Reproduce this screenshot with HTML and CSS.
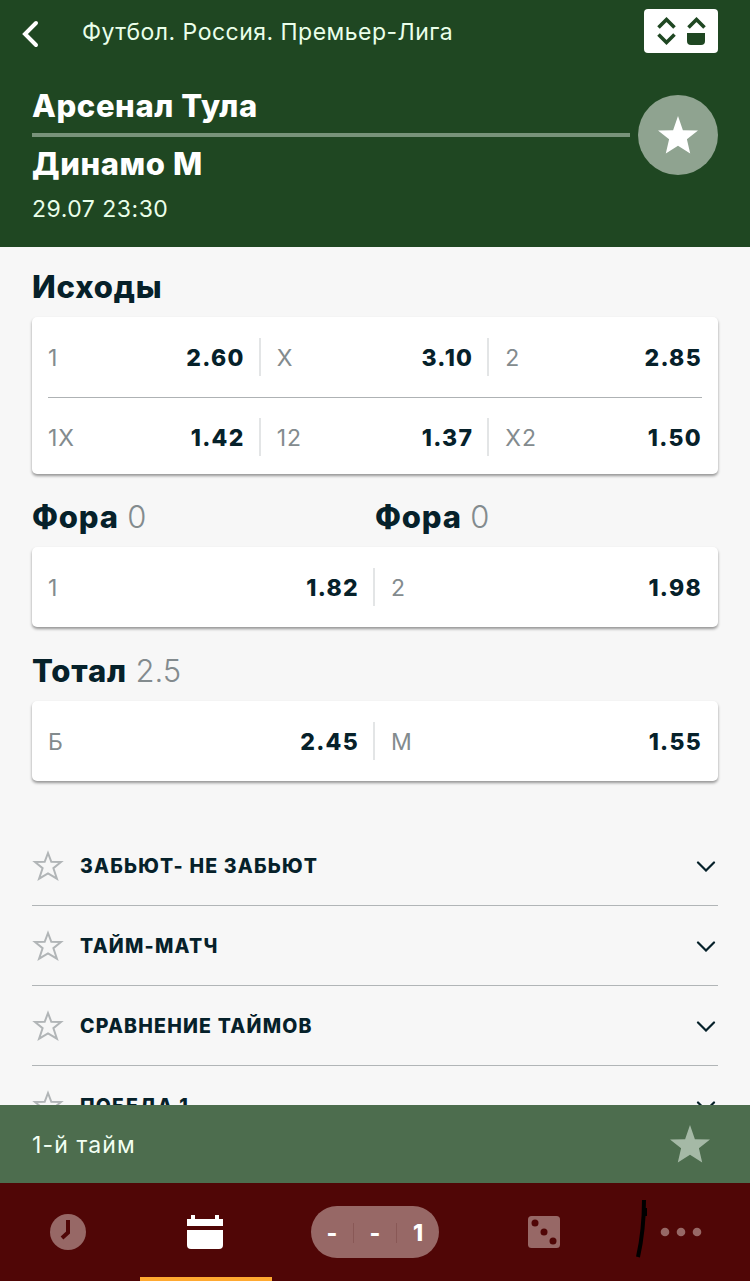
FILE: index.html
```
<!DOCTYPE html>
<html lang="ru">
<head>
    <meta charset="UTF-8">
    <meta name="viewport" content="width=device-width, initial-scale=1.0">
    <title>Арсенал Тула - Динамо М</title>
    <link rel="stylesheet" href="styles.css">
</head>
<body>
<svg class="symbols">
    <symbol id="star" viewBox="0 0 40 38">
        <path d="M20 0L24.9 14.2L40 14.5L28.9 23.3L32.2 37.5L20 29.8L7.8 37.5L11.1 23.3L0 14.5L15.1 14.2Z"/>
    </symbol>
    <symbol id="star-outline" viewBox="0 0 32 32">
        <path d="M16 3L19.3 11.8L29 12L21.4 18.2L24.9 28.7L16 23.4L7.1 28.7L10.6 18.2L3 12L12.7 11.8Z" fill="none" stroke="#b1b5b7" stroke-width="2"/>
    </symbol>
    <symbol id="chevron" viewBox="0 0 20 12">
        <path d="M2 2.5L10 10.5L18 2.5" fill="none" stroke="#06212a" stroke-width="2.2" stroke-linecap="round"/>
    </symbol>
</svg>
<div class="app">
    <header class="header">
        <div class="topbar">
            <svg class="back" width="20" height="30" viewBox="0 0 20 30">
                <path d="M16 4L5 15L16 26" fill="none" stroke="#fff" stroke-width="4" stroke-linecap="round"/>
            </svg>
            <div class="league">Футбол. Россия. Премьер-Лига</div>
            <div class="view-toggle">
                <svg width="74" height="44" viewBox="0 0 74 44">
                    <path d="M14.5 18.5L22.5 10.5L30.5 18.5M14.5 25.5L22.5 33.5L30.5 25.5M44.5 18.5L52.5 10.5L60.5 18.5" fill="none" stroke="#1f4722" stroke-width="3.6"/>
                    <path d="M43 24H61V32Q61 36 57 36H47Q43 36 43 32Z" fill="#1f4722"/>
                </svg>
            </div>
        </div>
        <div class="match">
            <div class="teams">
                <div class="team">Арсенал Тула</div>
                <div class="team-line"></div>
                <div class="team">Динамо М</div>
            </div>
            <div class="favorite">
                <svg width="40" height="38"><use href="#star"/></svg>
            </div>
        </div>
        <div class="date">29.07 23:30</div>
    </header>

    <main class="content">
        <h2 class="title">Исходы</h2>
        <div class="card">
            <div class="row three">
                <div class="cell"><span>1</span><b>2.60</b></div>
                <div class="cell"><span>X</span><b>3.10</b></div>
                <div class="cell"><span>2</span><b>2.85</b></div>
            </div>
            <div class="separator"></div>
            <div class="row three second">
                <div class="cell"><span>1X</span><b>1.42</b></div>
                <div class="cell"><span>12</span><b>1.37</b></div>
                <div class="cell"><span>X2</span><b>1.50</b></div>
            </div>
        </div>

        <div class="titles">
            <h2 class="title">Фора <span>0</span></h2>
            <h2 class="title">Фора <span>0</span></h2>
        </div>
        <div class="card">
            <div class="row two">
                <div class="cell"><span>1</span><b>1.82</b></div>
                <div class="cell"><span>2</span><b>1.98</b></div>
            </div>
        </div>

        <div class="titles total">
            <h2 class="title">Тотал <span>2.5</span></h2>
        </div>
        <div class="card">
            <div class="row two">
                <div class="cell"><span>Б</span><b>2.45</b></div>
                <div class="cell"><span>М</span><b>1.55</b></div>
            </div>
        </div>

        <div class="markets">
            <div class="market">
                <svg width="32" height="32"><use href="#star-outline"/></svg>
                <div class="market-name">ЗАБЬЮТ- НЕ ЗАБЬЮТ</div>
                <svg class="arrow" width="20" height="12"><use href="#chevron"/></svg>
            </div>
            <div class="market">
                <svg width="32" height="32"><use href="#star-outline"/></svg>
                <div class="market-name">ТАЙМ-МАТЧ</div>
                <svg class="arrow" width="20" height="12"><use href="#chevron"/></svg>
            </div>
            <div class="market">
                <svg width="32" height="32"><use href="#star-outline"/></svg>
                <div class="market-name">СРАВНЕНИЕ ТАЙМОВ</div>
                <svg class="arrow" width="20" height="12"><use href="#chevron"/></svg>
            </div>
            <div class="market">
                <svg width="32" height="32"><use href="#star-outline"/></svg>
                <div class="market-name">ПОБЕДА 1</div>
                <svg class="arrow" width="20" height="12"><use href="#chevron"/></svg>
            </div>
        </div>
    </main>

    <div class="period">
        <span>1-й тайм</span>
        <svg width="40" height="38"><use href="#star"/></svg>
    </div>

    <nav class="tabs">
        <div class="tab">
            <svg width="36" height="36" viewBox="0 0 36 36">
                <circle cx="18" cy="18" r="18" fill="#976866"/>
                <path d="M18 6V18.5L12 24" fill="none" stroke="#500606" stroke-width="4"/>
            </svg>
        </div>
        <div class="tab active">
            <svg width="36" height="36" viewBox="0 0 36 36" fill="#fff">
                <path d="M0 5H4V1H8V5H28V1H32V5H36V12H0Z"/>
                <path d="M0 16H36V31Q36 35 32 35H4Q0 35 0 31Z"/>
            </svg>
        </div>
        <div class="tab">
            <div class="coupon"><span>-</span><span>-</span><span>1</span></div>
        </div>
        <div class="tab">
            <svg width="32" height="32" viewBox="0 0 32 32">
                <rect width="32" height="32" rx="3.5" fill="#976866"/>
                <g fill="#500606"><circle cx="7" cy="7" r="3.5"/><circle cx="16" cy="16" r="3.5"/><circle cx="25" cy="25" r="3.5"/></g>
            </svg>
        </div>
        <div class="tab last">
            <svg width="70" height="60" viewBox="0 0 70 60">
                <path d="M9 2Q9 32 3 59" fill="none" stroke="#000" stroke-width="4"/>
                <path d="M10 10V18" stroke="#000" stroke-width="4"/>
                <g fill="#976866"><circle cx="30" cy="34" r="4.3"/><circle cx="46" cy="34" r="4.3"/><circle cx="62" cy="34" r="4.3"/></g>
            </svg>
        </div>
    </nav>
</div>
</body>
</html>
```
FILE: styles.css
```
* {
    box-sizing: border-box;
}

body {
    margin: 0;
    font-family: 'Inter', 'Open Sans', sans-serif;
    font-size: 23px;
    color: #06212a;
    background-color: #f7f7f7;
}

svg {
    display: block;
    flex: none;
}

.symbols {
    display: none;
}

.app {
    display: flex;
    flex-direction: column;
    height: 1281px;
    overflow: hidden;
}

.header {
    flex: none;
    height: 247px;
    padding: 9px 32px 0;
    background-color: #1f4722;
    color: #fff;
}

.topbar {
    display: flex;
    height: 44px;
}

.back {
    margin: 10px 0 0 -12px;
}

.league {
    flex: 1;
    margin-left: 42px;
    line-height: 46px;
    letter-spacing: 0.48px;
    color: #eaffea;
}

.view-toggle {
    background-color: #fff;
    border-radius: 4px;
    overflow: hidden;
}

.match {
    display: flex;
    align-items: center;
    gap: 8px;
    margin-top: 33px;
}

.teams {
    flex: 1;
}

.team {
    padding-bottom: 1px;
    font-size: 31px;
    font-weight: 800;
    line-height: 39px;
    letter-spacing: 0.6px;
}

.team-line {
    height: 4px;
    margin: 7px 0;
    background-color: #78937a;
}

.favorite {
    display: flex;
    align-items: center;
    justify-content: center;
    width: 80px;
    height: 80px;
    border-radius: 50%;
    background-color: #8fa390;
    fill: #fff;
}

.date {
    margin-top: 10px;
    line-height: 30px;
    letter-spacing: 0.5px;
    color: #eaffea;
}

.content {
    flex: none;
    height: 858px;
    padding: 20px 32px 0;
    overflow: hidden;
}

.title {
    margin: 0 0 10px;
    font-size: 31px;
    font-weight: 800;
    line-height: 40px;
    letter-spacing: 0.8px;
}

.title span {
    margin-left: 1px;
    font-weight: 300;
    letter-spacing: 0;
    color: #838b8e;
}

.titles {
    display: grid;
    grid-template-columns: 1fr 1fr;
    padding-top: 23px;
}

.total {
    padding-top: 24px;
}

.card {
    background-color: #fff;
    border-radius: 5px;
    box-shadow: 0 2px 3px rgba(0, 0, 0, 0.4);
}

.row {
    display: grid;
    align-items: center;
    height: 80px;
}

.three {
    grid-template-columns: repeat(3, 1fr);
}

.two {
    grid-template-columns: repeat(2, 1fr);
}

.second {
    height: 76px;
    padding-top: 2px;
}

.separator {
    height: 1px;
    margin: 0 16px;
    background-color: #aeb2b4;
}

.cell {
    display: flex;
    align-items: center;
    justify-content: space-between;
    height: 38px;
    padding: 2px 14px 0 16px;
    border-right: 2px solid #e3e5e6;
}

.cell:last-child {
    padding-right: 16px;
    border-right: none;
}

.cell span {
    color: #838b8e;
    letter-spacing: 1px;
}

.cell b {
    font-weight: 800;
    letter-spacing: 1.3px;
}

.markets {
    margin-top: 45px;
}

.market {
    display: flex;
    align-items: center;
    height: 80px;
    border-bottom: 1px solid #b1b5b7;
}

.market-name {
    flex: 1;
    margin-left: 16px;
    font-size: 19.5px;
    font-weight: 800;
    letter-spacing: 1.2px;
}

.arrow {
    margin-right: 2px;
}

.period {
    flex: none;
    display: flex;
    align-items: center;
    justify-content: space-between;
    height: 78px;
    padding: 0 40px 0 32px;
    background-color: #4d6d4e;
    color: #f2fff2;
    fill: #a5b9a6;
}

.period span {
    padding-top: 2px;
    letter-spacing: 1.1px;
}

.tabs {
    flex: none;
    display: grid;
    grid-template-columns: 136px 138px 202px 136px 138px;
    height: 98px;
    background-color: #500606;
}

.tab {
    display: flex;
    align-items: center;
    justify-content: center;
}

.active {
    width: 132px;
    margin-left: 4px;
    padding: 4px 2px 0 0;
    border-bottom: 4px solid #ffa931;
}

.coupon {
    display: flex;
    align-items: center;
    width: 128px;
    height: 52px;
    padding-top: 1px;
    border-radius: 26px;
    background-color: #976866;
    color: #fff;
    font-weight: 800;
}

.coupon span {
    flex: 1;
    text-align: center;
    line-height: 20px;
    border-right: 1px solid #895856;
}

.coupon span:last-child {
    border-right: none;
}

.last {
    justify-content: flex-end;
    padding: 0 45px 8px 0;
}
```
